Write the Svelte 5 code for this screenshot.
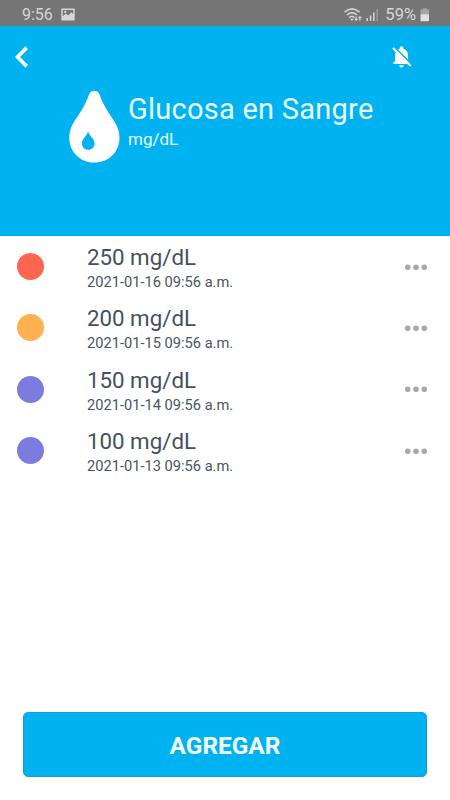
<script>
  const title = 'Glucosa en Sangre';
  const unit = 'mg/dL';

  // Dot color depends on how high the reading is
  const levelColors = {
    high: '#ff6650',
    elevated: '#ffb050',
    normal: '#7c7ce0'
  };

  let records = [
    { value: 250, date: '2021-01-16 09:56 a.m.', level: 'high' },
    { value: 200, date: '2021-01-15 09:56 a.m.', level: 'elevated' },
    { value: 150, date: '2021-01-14 09:56 a.m.', level: 'normal' },
    { value: 100, date: '2021-01-13 09:56 a.m.', level: 'normal' }
  ];
</script>

<div class="screen">
  <div class="status-bar">
    <span class="time">9:56</span>
    <svg class="picture" width="14" height="13" viewBox="0 0 14 13">
      <path fill="#d6d6d6" fill-rule="evenodd" d="M1 0.5H13Q13.7 0.5 13.7 1.2V11.8Q13.7 12.5 13 12.5H1Q0.3 12.5 0.3 11.8V1.2Q0.3 0.5 1 0.5ZM1.8 2V8.2L4.8 5.6L7.2 7.6L10.3 4.2L12.2 6V2Z" />
      <circle cx="4.3" cy="3.9" r="1.2" fill="#d6d6d6" />
    </svg>
    <div class="status-right">
      <svg class="wifi" width="19" height="14" viewBox="0 0 19 14">
        <g fill="none" stroke="#d6d6d6" stroke-width="1.6">
          <path d="M0.6 4.2Q8 -2.5 15.6 4.2" />
          <path d="M2.9 7Q8 2.4 13 7" />
          <path d="M5.2 9.6Q8 7 10.4 9.6" />
        </g>
        <path fill="#d6d6d6" d="M8 13L6.4 11.2Q8 10 9.6 11.2ZM11.6 8.5H12.8V10.7H14.2L12.2 13.3L10.2 10.7H11.6ZM15.2 12.5V10.3H13.9L15.9 7.7L17.9 10.3H16.5V12.5Z" />
      </svg>
      <svg class="signal" width="13" height="12" viewBox="0 0 13 12">
        <path fill="#d6d6d6" d="M0.5 9H2V12H0.5ZM3.8 6.5H5.3V12H3.8ZM7.1 3.5H8.6V12H7.1Z" />
        <path fill="#999" d="M10.4 0.3H11.9V12H10.4Z" />
      </svg>
      <span class="percent">59%</span>
      <svg class="battery" width="10" height="14" viewBox="0 0 10 14">
        <path fill="#a5a5a5" d="M2.8 0.3H6.8V1.6H9V6.8H0.5V1.6H2.8Z" />
        <path fill="#e2e2e2" d="M0.5 6.2H9V12.6Q9 13.3 8.3 13.3H1.2Q0.5 13.3 0.5 12.6Z" />
      </svg>
    </div>
  </div>

  <header>
    <div class="nav">
      <button class="icon-btn" aria-label="Volver">
        <svg width="14" height="22" viewBox="0 0 14 22">
          <path d="M11.7 1.6L2.5 11L11.7 20.4" fill="none" stroke="#fff" stroke-width="3.7" />
        </svg>
      </button>
      <button class="icon-btn" aria-label="Silenciar">
        <svg width="20" height="24" viewBox="0 0 20 24">
          <path fill="#fff" d="M7.7 3.8V3Q7.7 1.2 9.5 1.2Q11.3 1.2 11.3 3V3.8Q15.9 5.2 15.9 10.3V16L17.8 18V19H1.2V18L3.2 16V10.3Q3.2 5.2 7.7 3.8ZM7.2 20.2H11.8Q11.5 22.4 9.5 22.4Q7.5 22.4 7.2 20.2Z" />
          <path d="M2.3 1.8L20 19.7" stroke="#00b3f0" stroke-width="1.6" />
          <path d="M1 3L18.7 21" stroke="#fff" stroke-width="2" />
        </svg>
      </button>
    </div>
    <div class="heading">
      <svg class="drop" width="52" height="74" viewBox="0 0 52 74">
        <path fill="#fff" d="M21.3 4C23.1 -0.3 29.5 -0.3 31.3 4C33.6 10.5 36.6 16.5 40.5 22.5C45 29.5 51.5 37 51.5 47.7C51.5 62 40.5 72.5 26.3 72.5C12.3 72.5 1.3 62 1.3 47.7C1.3 37 7.6 29.5 12.1 22.5C16 16.5 19 10.5 21.3 4Z" />
        <path fill="#00b3f0" d="M20.1 41.5C21.7 46.5 26.5 48.5 26.5 53.5C26.5 57.2 23.9 59.8 20.2 59.8C16.6 59.8 14 57.2 14 53.5C14 48.5 18.7 46.5 20.1 41.5Z" />
      </svg>
      <div class="heading-text">
        <h1>{title}</h1>
        <p>{unit}</p>
      </div>
    </div>
  </header>

  <ul class="records">
    {#each records as record}
      <li class="record">
        <span class="dot" style="background-color: {levelColors[record.level]}"></span>
        <div class="info">
          <span class="value">{record.value} {unit}</span>
          <span class="date">{record.date}</span>
        </div>
        <button class="icon-btn" aria-label="Opciones">
          <svg width="24" height="8" viewBox="0 0 24 8">
            <g fill="#a9a9a9">
              <circle cx="3.7" cy="4.2" r="2.8" />
              <circle cx="12" cy="4.2" r="2.8" />
              <circle cx="20.3" cy="4.2" r="2.8" />
            </g>
          </svg>
        </button>
      </li>
    {/each}
  </ul>

  <button class="add-btn">AGREGAR</button>
</div>

<style>
  :global(body) {
    margin: 0;
    background: #fff;
  }

  .screen {
    display: flex;
    flex-direction: column;
    box-sizing: border-box;
    width: 450px;
    height: 800px;
    padding-bottom: 23px;
    background: #fff;
    font-family: Roboto, sans-serif;
    overflow: hidden;
  }

  .status-bar {
    display: flex;
    align-items: center;
    box-sizing: border-box;
    height: 26px;
    padding: 3px 20px 0 22px;
    background: #757575;
    color: #d6d6d6;
    font-size: 16px;
    line-height: 22px;
  }

  .time {
    width: 39px;
  }

  .status-right {
    display: flex;
    align-items: center;
    margin-left: auto;
  }

  .signal {
    margin-left: 3px;
  }

  .percent {
    margin-left: 6px;
    font-size: 16.5px;
  }

  .battery {
    margin-left: 4px;
  }

  header {
    height: 210px;
    background: #00b3f0;
    color: #e9fbff;
  }

  .nav {
    display: flex;
    align-items: center;
    justify-content: space-between;
    height: 62px;
    padding: 0 38px 0 15px;
  }

  .icon-btn {
    display: flex;
    padding: 0;
    border: none;
    background: none;
    cursor: pointer;
  }

  .heading {
    display: flex;
    padding: 2px 0 0 68px;
  }

  .heading-text {
    padding: 2px 0 0 8px;
  }

  h1 {
    margin: 0;
    font-size: 29px;
    font-weight: 400;
    line-height: 34px;
    letter-spacing: 0.25px;
    white-space: nowrap;
  }

  .heading-text p {
    margin: 3px 0 0;
    font-size: 17px;
    line-height: 20px;
  }

  .records {
    margin: 0;
    padding: 0;
    list-style: none;
  }

  .record {
    display: flex;
    align-items: center;
    height: 61.3px;
    padding: 0 22px 0 17px;
  }

  .dot {
    width: 27px;
    height: 27px;
    border-radius: 50%;
  }

  .info {
    display: flex;
    flex: 1;
    flex-direction: column;
    margin-left: 43px;
    padding-top: 3.6px;
  }

  .value {
    color: #44505e;
    font-size: 22.3px;
    line-height: 27px;
  }

  .date {
    color: #4b5560;
    font-size: 14.65px;
    line-height: 22px;
  }

  .add-btn {
    height: 65px;
    margin: auto 23px 0;
    padding: 2px 0 0;
    border: 1px solid #0ba3da;
    border-radius: 5px;
    background: #00b3f0;
    color: #f2fdff;
    font-family: inherit;
    font-size: 24.4px;
    font-weight: 700;
    cursor: pointer;
  }
</style>
